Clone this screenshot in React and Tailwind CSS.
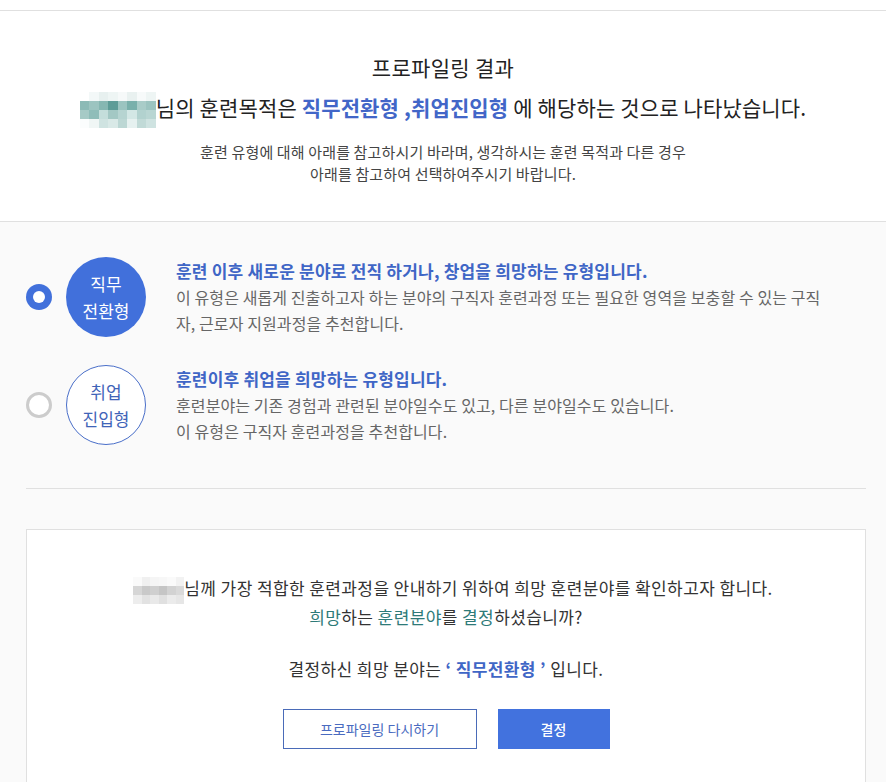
import React from "react";

const font = { fontFamily: '"Noto Sans CJK KR", "Noto Sans", sans-serif' };

const tealMosaic = [
  ["#ffffff", "#f3f8f8", "#e7f0ef", "#eef5f4", "#f6f9f9", "#e9f1f0", "#f7fafa", "#eef5f4"],
  ["#8cbab6", "#9cc4c0", "#86b7b2", "#5d9c97", "#9bc4c0", "#79b0ab", "#a9ccc8", "#9cc4c0"],
  ["#a6cac6", "#8fbdb9", "#c4dedb", "#a3c8c4", "#b6d4d1", "#d3e7e5", "#b2d2cf", "#b9d6d3"],
  ["#fbfdfd", "#f0f6f5", "#cfe3e1", "#d9e9e7", "#bcd7d4", "#e6f1f0", "#c1dad7", "#cfe3e1"],
];

const grayMosaic = [
  ["#fafafa", "#f0f0f0", "#f5f5f5", "#f7f7f7", "#fafafa", "#f2f2f2"],
  ["#d6d6d6", "#c9c9c9", "#cfcfcf", "#c5c5c5", "#d2d2d2", "#d9d9d9"],
  ["#ededed", "#e2e2e2", "#e9e9e9", "#e0e0e0", "#ebebeb", "#e6e6e6"],
];

function Mosaic({ rows, cell }) {
  return (
    <span className="inline-flex flex-col align-middle">
      {rows.map((row, i) => (
        <span key={i} className="flex">
          {row.map((c, j) => (
            <span key={j} className={cell} style={{ backgroundColor: c }} />
          ))}
        </span>
      ))}
    </span>
  );
}

function Radio({ checked }) {
  return checked ? (
    <span className="flex h-[26px] w-[26px] shrink-0 items-center justify-center rounded-full bg-[#4170db]">
      <span className="h-[12px] w-[12px] rounded-full bg-white" />
    </span>
  ) : (
    <span className="h-[26px] w-[26px] shrink-0 rounded-full border-[3px] border-[#cccccc] bg-white" />
  );
}

function TypeRow({ checked, label1, label2, title, lines }) {
  return (
    <div className="flex items-center">
      <Radio checked={checked} />
      <div
        className={`ml-[14px] flex h-[80px] w-[80px] shrink-0 flex-col items-center justify-center rounded-full text-[17px] leading-[27px] ${
          checked ? "bg-[#4170db] text-white" : "border border-[#4a6fc9] bg-white text-[#3f64b8]"
        }`}
      >
        <span>{label1}</span>
        <span>{label2}</span>
      </div>
      <div className="ml-[30px] w-[652px]">
        <p className="text-[17px] font-bold leading-[26px] tracking-[0.2px] text-[#3f66c6]">{title}</p>
        <p className="text-[16px] leading-[26px] tracking-[0.1px] text-[#666666]">{lines}</p>
      </div>
    </div>
  );
}

export default function App() {
  return (
    <div className="min-h-screen bg-[#fafafa]" style={font}>
      <div className="h-[10px] bg-white" />
      <section className="border-y border-[#e0e0e0] bg-white pb-[36px] pt-[41px] text-center">
        <h1 className="text-[21px] leading-[30px] tracking-[0.3px] text-[#222222]">프로파일링 결과</h1>
        <p className="mt-[9px] text-[21px] leading-[32px] tracking-[0.15px] text-[#222222]">
          <Mosaic rows={tealMosaic} cell="h-[9px] w-[9.5px]" />
          님의 훈련목적은 <b className="font-bold text-[#4266c8]">직무전환형 ,취업진입형</b> 에 해당하는 것으로 나타났습니다.
        </p>
        <p className="mt-[13px] text-[15px] leading-[22px] tracking-[0.15px] text-[#444444]">
          훈련 유형에 대해 아래를 참고하시기 바라며, 생각하시는 훈련 목적과 다른 경우
          <br />
          아래를 참고하여 선택하여주시기 바랍니다.
        </p>
      </section>

      <div className="ml-[26px] mr-[20px]">
        <div className="flex flex-col gap-[28px] pt-[35px]">
          <TypeRow
            checked
            label1="직무"
            label2="전환형"
            title="훈련 이후 새로운 분야로 전직 하거나, 창업을 희망하는 유형입니다."
            lines="이 유형은 새롭게 진출하고자 하는 분야의 구직자 훈련과정 또는 필요한 영역을 보충할 수 있는 구직자, 근로자 지원과정을 추천합니다."
          />
          <TypeRow
            label1="취업"
            label2="진입형"
            title="훈련이후 취업을 희망하는 유형입니다."
            lines={
              <>
                훈련분야는 기존 경험과 관련된 분야일수도 있고, 다른 분야일수도 있습니다.
                <br />
                이 유형은 구직자 훈련과정을 추천합니다.
              </>
            }
          />
        </div>

        <hr className="mt-[43px] border-t border-[#e0e0e0]" />

        <div className="mt-[40px] border border-[#e0e0e0] bg-white pb-[60px] pt-[45px] text-center text-[17px] leading-[26px] tracking-[0.4px] text-[#333333]">
          <p className="pl-[14px]">
            <Mosaic rows={grayMosaic} cell="h-[9px] w-[8.5px]" />
            님께 가장 적합한 훈련과정을 안내하기 위하여 희망 훈련분야를 확인하고자 합니다.
          </p>
          <p>
            <span className="text-[#2d7a78]">희망</span>하는 <span className="text-[#2d7a78]">훈련분야</span>를{" "}
            <span className="text-[#2d7a78]">결정</span>하셨습니까?
          </p>
          <p className="mt-[26px]">
            결정하신 희망 분야는 <b className="font-bold text-[#3f66c6]">‘ 직무전환형 ’</b> 입니다.
          </p>
          <div className="mt-[27px] flex justify-center gap-[21px] tracking-normal">
            <button
              type="button"
              className="h-[40px] w-[194px] border border-[#4a6bb8] bg-white text-[14px] text-[#4a6bc0]"
            >
              프로파일링 다시하기
            </button>
            <button type="button" className="h-[40px] w-[112px] bg-[#4272de] text-[14px] font-medium text-white">
              결정
            </button>
          </div>
        </div>
      </div>
    </div>
  );
}
